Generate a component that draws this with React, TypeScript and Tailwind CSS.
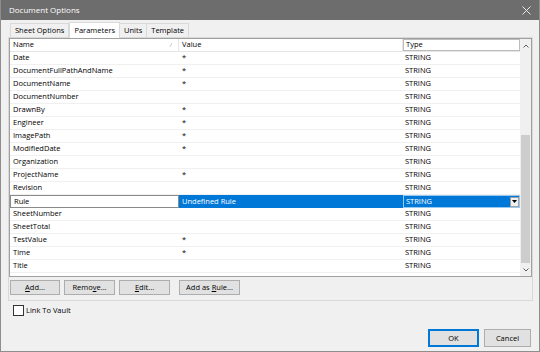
import React from "react";

// Parameter rows shown in the grid
interface Param {
  name: string;
  value: string;
  type: string;
}

const params: Param[] = [
  { name: "Date", value: "*", type: "STRING" },
  { name: "DocumentFullPathAndName", value: "*", type: "STRING" },
  { name: "DocumentName", value: "*", type: "STRING" },
  { name: "DocumentNumber", value: "", type: "STRING" },
  { name: "DrawnBy", value: "*", type: "STRING" },
  { name: "Engineer", value: "*", type: "STRING" },
  { name: "ImagePath", value: "*", type: "STRING" },
  { name: "ModifiedDate", value: "*", type: "STRING" },
  { name: "Organization", value: "", type: "STRING" },
  { name: "ProjectName", value: "*", type: "STRING" },
  { name: "Revision", value: "", type: "STRING" },
  { name: "Rule", value: "Undefined Rule", type: "STRING" },
  { name: "SheetNumber", value: "", type: "STRING" },
  { name: "SheetTotal", value: "", type: "STRING" },
  { name: "TestValue", value: "*", type: "STRING" },
  { name: "Time", value: "*", type: "STRING" },
  { name: "Title", value: "", type: "STRING" },
];

const tabs = ["Sheet Options", "Parameters", "Units", "Template"];

const Btn: React.FC<{ children: React.ReactNode; className: string }> = ({ children, className }) => (
  <button className={`${className} h-[15px] bg-[#e1e1e1] border border-[#adadad] text-[7.5px] leading-none text-black flex items-center justify-center`}>
    <span className="whitespace-pre">{children}</span>
  </button>
);

const App: React.FC = () => {
  return (
    <div
      className="w-[540px] h-[352px] bg-[#f0f0f0] border-x border-b border-[#8e8e8e] flex flex-col text-[7.5px] text-black overflow-hidden"
      style={{ fontFamily: '"Open Sans", "Noto Sans", sans-serif' }}
    >
      {/* Title bar */}
      <div className="h-[20px] shrink-0 bg-[#6d6d6d] flex items-center justify-between pl-[8px] pr-[8px] text-white">
        <span className="text-[8px]">Document Options</span>
        <svg width="9" height="9" viewBox="0 0 9 9">
          <path d="M0.5 0.5 L8.5 8.5 M8.5 0.5 L0.5 8.5" stroke="#e8e8e8" strokeWidth="1" />
        </svg>
      </div>

      <div className="pl-[7px] pr-[6px] flex flex-col">
        {/* Tabs */}
        <div className="h-[17px] flex items-end pl-[2px]">
          {tabs.map((t) =>
            t === "Parameters" ? (
              <div key={t} className="h-[16px] bg-white border border-b-0 border-[#d9d9d9] px-[4px] flex items-center -mb-px relative z-10">
                {t}
              </div>
            ) : (
              <div key={t} className="h-[14px] border border-b-0 border-[#d9d9d9] -ml-px first:ml-0 px-[4px] flex items-center bg-[#f0f0f0]">
                {t}
              </div>
            )
          )}
        </div>

        {/* Tab page */}
        <div className="h-[264px] border border-[#d9d9d9] bg-[#f0f0f0] flex flex-col">
          {/* Grid */}
          <div className="h-[239px] bg-white border border-[#a0a0a0] flex">
            <div className="flex-1 flex flex-col">
              {/* Header */}
              <div className="h-[13px] flex border-b border-[#e5e5e5]">
                <div className="w-[169px] pl-[3px] flex items-center justify-between pr-[6px] border-r border-[#e5e5e5]">
                  <span>Name</span>
                  <span className="text-[6px] text-[#9a9a9a]">/</span>
                </div>
                <div className="w-[224px] pl-[3px] flex items-center border-r border-[#e5e5e5]">Value</div>
                <div className="w-[117px] pl-[2px] flex items-center border border-[#bcbcbc]">Type</div>
              </div>
              {/* Rows */}
              {params.map((p) =>
                p.name === "Rule" ? (
                  <div key={p.name} className="h-[13px] flex">
                    <div className="w-[169px] pl-[3px] flex items-center border border-[#8a8a8a] bg-white">{p.name}</div>
                    <div className="w-[224px] pl-[3px] flex items-center bg-[#0078d7] text-white">{p.value}</div>
                    <div className="w-[117px] pl-[2px] flex items-center justify-between bg-[#0078d7] text-white border border-[#99c9ef]">
                      <span>{p.type}</span>
                      <div className="w-[9px] h-[10px] bg-[#f0f0f0] border border-[#a0a0a0] flex items-center justify-center">
                        <svg width="5" height="3" viewBox="0 0 5 3">
                          <path d="M0 0 H5 L2.5 3 Z" fill="#000" />
                        </svg>
                      </div>
                    </div>
                  </div>
                ) : (
                  <div key={p.name} className="h-[13px] flex border-b border-[#f0f0f0]">
                    <div className="w-[169px] pl-[3px] flex items-center">{p.name}</div>
                    <div className="w-[224px] pl-[3px] flex items-center">{p.value}</div>
                    <div className="w-[117px] pl-[2px] flex items-center">{p.type}</div>
                  </div>
                )
              )}
            </div>
            {/* Scrollbar */}
            <div className="w-[12px] bg-[#f0f0f0] flex flex-col items-stretch">
              <div className="h-[13px] flex items-center justify-center">
                <svg width="6" height="4" viewBox="0 0 6 4">
                  <path d="M0.5 3.5 L3 1 L5.5 3.5" stroke="#606060" fill="none" strokeWidth="1" />
                </svg>
              </div>
              <div className="flex-1 flex flex-col">
                <div className="h-[83px]" />
                <div className="h-[128px] bg-[#cdcdcd] mx-[1px]" />
              </div>
              <div className="h-[13px] flex items-center justify-center">
                <svg width="6" height="4" viewBox="0 0 6 4">
                  <path d="M0.5 0.5 L3 3 L5.5 0.5" stroke="#606060" fill="none" strokeWidth="1" />
                </svg>
              </div>
            </div>
          </div>

          {/* Buttons */}
          <div className="flex mt-[3px] pl-[1px]">
            <Btn className="w-[50px]"><span className="underline">A</span>dd...</Btn>
            <Btn className="w-[51px] ml-[4px]">Remo<span className="underline">v</span>e...</Btn>
            <Btn className="w-[51px] ml-[4px]"><span className="underline">E</span>dit...</Btn>
            <Btn className="w-[61px] ml-[9px]">Add as <span className="underline">R</span>ule...</Btn>
          </div>
        </div>

        {/* Checkbox */}
        <div className="flex items-center mt-[4px] pl-[5px] gap-[2px]">
          <div className="w-[11px] h-[11px] border border-[#333] bg-white" />
          <span>Link To Vault</span>
        </div>

        {/* OK / Cancel */}
        <div className="flex justify-end gap-[5px] mt-[13px] pr-[2px]">
          <button className="w-[51px] h-[18px] bg-[#e1e1e1] border-2 border-[#0078d7] text-[7.5px] leading-none flex items-center justify-center">OK</button>
          <button className="w-[47px] h-[18px] bg-[#e1e1e1] border border-[#adadad] text-[7.5px] leading-none flex items-center justify-center">Cancel</button>
        </div>
      </div>
    </div>
  );
};

export default App;
